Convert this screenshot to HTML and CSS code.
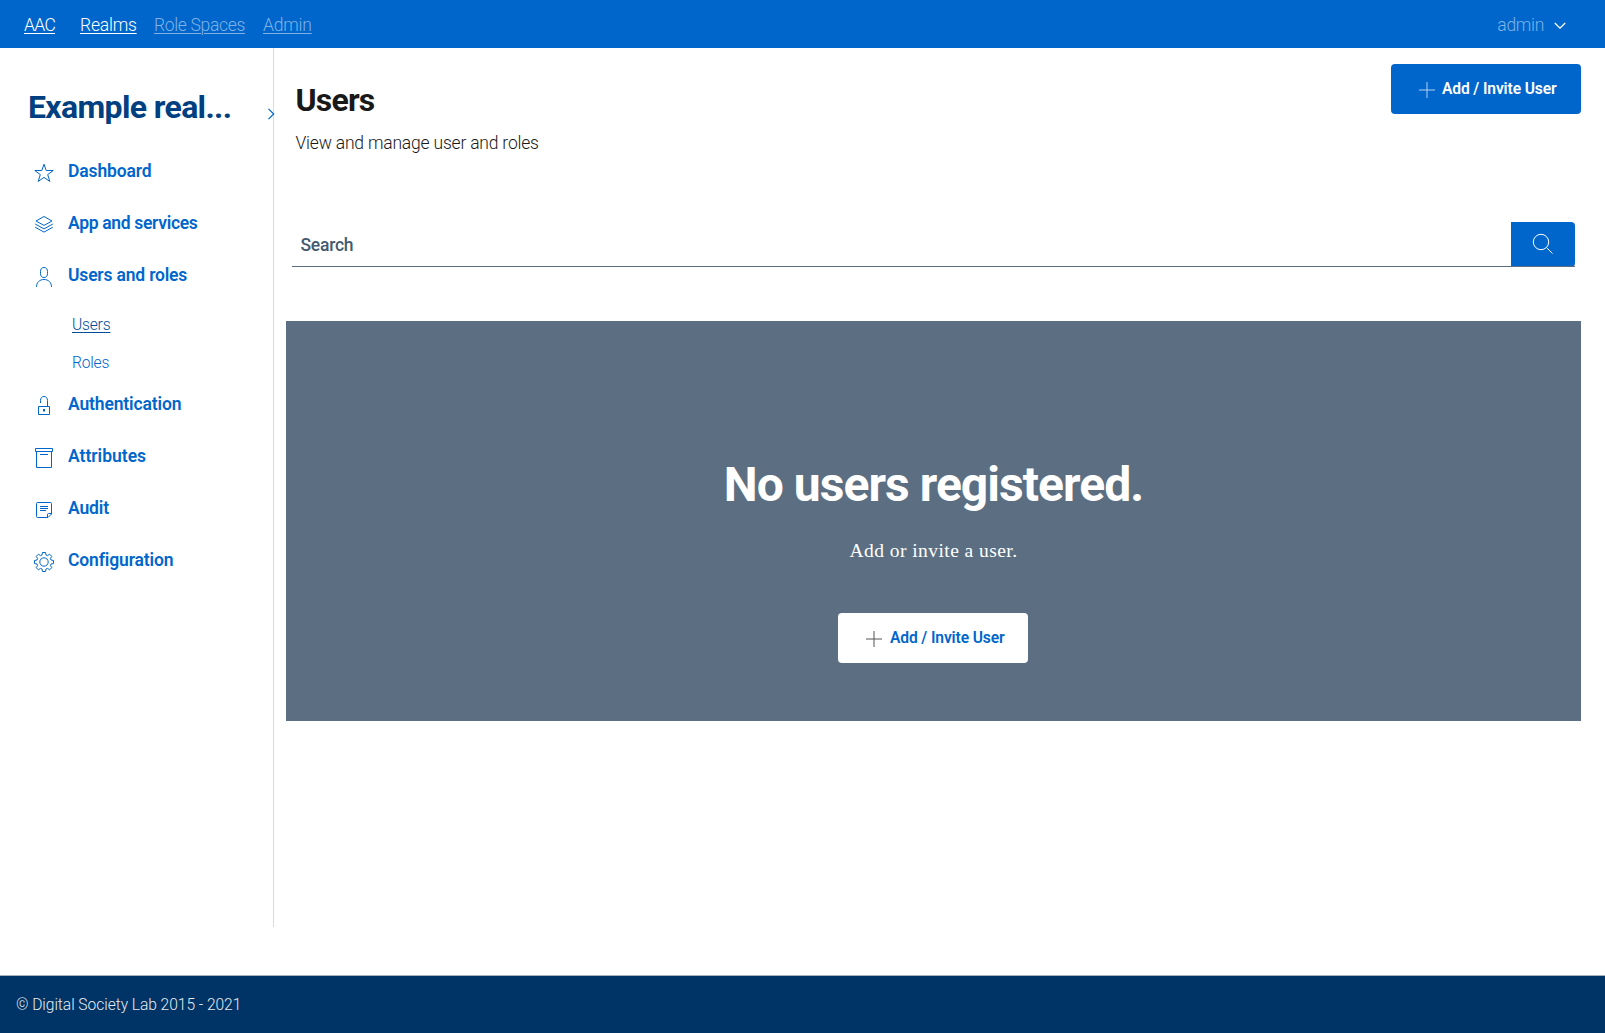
FILE: index.html
```html
<!DOCTYPE html>
<html lang="en">
<head>
<meta charset="utf-8">
<title>Users</title>
<link rel="stylesheet" href="styles.css">
</head>
<body>
<header class="topbar">
  <nav class="topnav">
    <a class="brand on" href="#"><span>AAC</span></a>
    <a class="realms on" href="#">Realms</a>
    <a class="spaces" href="#">Role Spaces</a>
    <a class="adm" href="#">Admin</a>
  </nav>
  <div class="account"><span>admin</span>
    <svg width="12" height="8" viewBox="0 0 12 8"><path d="M.8 1 6 6.2 11.2 1"/></svg>
  </div>
</header>
<div class="layout">
  <aside class="sidebar">
    <div class="realm"><h2>Example real...</h2>
      <svg class="expand" width="8" height="12" viewBox="0 0 8 12"><path d="M1.5.8 6.7 6 1.5 11.2"/></svg>
    </div>
    <nav class="menu">
      <a class="item dashboard" href="#"><svg class="icon" viewBox="0 0 24 24"><path d="M12 3.2 14.2 9.5H21.2L15.7 13.6 17.8 20.4 12 16.4 6.2 20.4 8.3 13.6 2.8 9.5H9.8Z"/></svg><span>Dashboard</span></a>
      <a class="item apps" href="#"><svg class="icon" viewBox="0 0 24 24"><path d="M12 3.5 20 8 12 12.4 4 8ZM3.2 11 12 15.9 20.8 11M3.2 14.2 12 19.1 20.8 14.2"/></svg><span>App and services</span></a>
      <a class="item people" href="#"><svg class="icon" viewBox="0 0 24 24"><path d="M12 2.5C9.6 2.5 8.5 4.200 8.500 6.500V8.500C8.500 11 9.800 12.500 12 12.500S15.500 11 15.500 8.500V6.500C15.500 4.200 14.400 2.500 12 2.500ZM4.500 22C4.500 17.500 7.500 14.500 12 14.500S19.500 17.500 19.500 22"/></svg><span>Users and roles</span></a>
      <div class="submenu">
        <a class="current" href="#">Users</a>
        <a class="roles" href="#">Roles</a>
      </div>
      <a class="item auth" href="#"><svg class="icon" viewBox="0 0 24 24"><path d="M8.500 9V6.500C8.500 4 9.800 2.500 12 2.500S15.500 4 15.500 6.500V12M6.500 12.500H17.500V20.500H6.500Z"/><path d="M12 15V17.500" stroke-width="2"/></svg><span>Authentication</span></a>
      <a class="item attrs" href="#"><svg class="icon" viewBox="0 0 24 24"><path d="M3.500 2.500H20.500V5.500H3.500ZM4.500 5.500V21.500H19.500V5.500M8 8.500H16"/></svg><span>Attributes</span></a>
      <a class="item audit" href="#"><svg class="icon" viewBox="0 0 24 24"><path d="M5.500 4.500H18.500Q19.500 4.500 19.500 5.500V16L16 19.500H5.500Q4.500 19.500 4.500 18.500V5.500Q4.500 4.500 5.500 4.500ZM19.500 15.500H16.500Q15.500 15.500 15.500 16.500V19.500M8 8.500H16M8 10.500H16M8 12.500H14"/></svg><span>Audit</span></a>
      <a class="item config" href="#"><svg class="icon" viewBox="0 0 24 24"><circle cx="12" cy="12" r="4.200"/><path d="M10.500 2.500H13.500L14 5 15.500 5.600 17.600 4.200 19.800 6.400 18.400 8.500 19 10 21.500 10.500V13.500L19 14 18.400 15.500 19.800 17.600 17.600 19.800 15.500 18.400 14 19 13.500 21.500H10.500L10 19 8.500 18.400 6.400 19.800 4.200 17.600 5.600 15.500 5 14 2.500 13.500V10.500L5 10 5.600 8.500 4.200 6.400 6.400 4.200 8.500 5.600 10 5Z" stroke-linejoin="round"/></svg><span>Configuration</span></a>
    </nav>
  </aside>
  <main class="content">
    <div class="heading">
      <div>
        <h1>Users</h1>
        <p>View and manage user and roles</p>
      </div>
      <button class="btn primary"><svg width="16" height="16" viewBox="0 0 16 16"><path d="M8 0V16M0 8H16"/></svg><span>Add / Invite User</span></button>
    </div>
    <div class="search">
      <label>Search</label>
      <button aria-label="Search"><svg width="22" height="22" viewBox="0 0 22 22"><circle cx="9" cy="9" r="7.700"/><path d="M14.600 14.600 20.500 20.500"/></svg></button>
    </div>
    <section class="hero">
      <h2>No users registered.</h2>
      <p>Add or invite a user.</p>
      <button class="btn light"><svg width="16" height="16" viewBox="0 0 16 16"><path d="M8 0V16M0 8H16"/></svg><span>Add / Invite User</span></button>
    </section>
  </main>
</div>
<footer class="footer">© Digital Society Lab 2015 - 2021</footer>
</body>
</html>
```
FILE: styles.css
```css
* { box-sizing: border-box; }
body { margin: 0; height: 1033px; display: flex; flex-direction: column; overflow: hidden; background: #fff; color: #19191a; font-family: Roboto, "Liberation Sans", sans-serif; font-size: 17.5px; font-weight: 300; }
h1, h2, p { margin: 0; white-space: nowrap; }
a { color: inherit; white-space: nowrap; }
svg { display: block; fill: none; stroke: currentColor; flex: none; }
button { border: 0; padding: 0; font: inherit; }

.topbar { height: 48px; padding: 2px 39px 0 24px; background: #06c; color: #7fb2e5; display: flex; justify-content: space-between; align-items: center; }
.topnav { display: flex; }
.topnav a { text-underline-offset: 2px; text-decoration-thickness: 1px; }
.topnav .on { color: #fff; }
.brand { width: 56px; letter-spacing: -.7px; }
.realms { width: 74px; letter-spacing: -.2px; }
.spaces { width: 109px; letter-spacing: -.33px; }
.adm { letter-spacing: -.2px; }
.account { display: flex; align-items: center; gap: 10px; letter-spacing: -.3px; }
.account svg { color: #fff; margin-top: 2px; stroke-width: 1.3; }

.layout { display: flex; height: 879px; }
.sidebar { width: 274px; border-right: 1px solid #d9dadb; padding-top: 39px; color: #06c; }
.realm { display: flex; align-items: center; justify-content: space-between; padding-left: 28px; height: 40px; margin-right: -2px; }
.realm h2 { font-size: 32px; line-height: 40px; color: #004080; letter-spacing: -.64px; }
.expand { margin-top: 13px; stroke-width: 1.2; }
.menu { margin-top: 18px; }
.item { height: 52px; padding-left: 32px; display: flex; align-items: center; gap: 12px; text-decoration: none; font-weight: 600; letter-spacing: -.14px; }
.apps { letter-spacing: -.32px; }
.people { letter-spacing: -.18px; }
.attrs { letter-spacing: 0; }
.icon { width: 24px; height: 24px; margin-top: 4px; }
.submenu { display: flex; flex-direction: column; align-items: flex-start; gap: 8px; padding: 9px 0 0 72px; font-size: 15.600px; line-height: 30px; letter-spacing: -.2px; }
.submenu a { text-decoration: none; }
.submenu .current { color: #004d99; text-decoration: underline 1px; text-underline-offset: 2px; }

.content { flex: 1; padding: 16px 24px 0 12px; }
.heading { display: flex; justify-content: space-between; align-items: flex-start; padding-left: 9.500px; height: 158px; }
.heading h1 { font-size: 32px; line-height: 40px; margin-top: 16px; letter-spacing: -.8px; }
.heading p { line-height: 24px; margin-top: 11px; letter-spacing: -.2px; }
.btn { width: 190px; height: 50px; border-radius: 4px; display: flex; align-items: center; padding-left: 28px; gap: 7px; font-size: 15.600px; font-weight: 600; white-space: nowrap; letter-spacing: -.12px; }
.btn svg { margin-top: 2px; }
.btn span { margin-top: -1px; }
.primary { background: #06c; color: #fff; }
.primary svg { color: #b2d1f0; }
.search { margin: 0 6px; height: 45px; display: flex; justify-content: space-between; border-bottom: 1px solid #5c6f82; }
.search label { padding-left: 8.500px; line-height: 46px; font-weight: 500; color: #435a70; letter-spacing: -.25px; }
.search button { width: 64px; height: 45px; margin-bottom: -1px; background: #06c; color: #fff; border-radius: 0 4px 4px 0; border-bottom: 1px solid #5c6f82; padding: 0 0 1px 21px; }
.hero { margin-top: 54px; height: 400px; background: #5c6f82; color: #fff; display: flex; flex-direction: column; align-items: center; }
.hero h2 { margin-top: 134px; font-size: 48px; line-height: 60px; letter-spacing: -.95px; }
.hero p { font-family: "Liberation Serif", serif; font-size: 19.500px; font-weight: 400; line-height: 30px; margin-top: 21px; letter-spacing: .45px; }
.light { margin: 47px 1px 0 0; background: #fff; color: #06c; gap: 8px; }
.light svg { color: #555; }
.footer { margin-top: 48px; height: 58px; border-top: 1px solid #a5b1bb; background: #036; color: #e5ebf0; padding-left: 16px; font-size: 15.600px; line-height: 58px; letter-spacing: -.05px; }
```
